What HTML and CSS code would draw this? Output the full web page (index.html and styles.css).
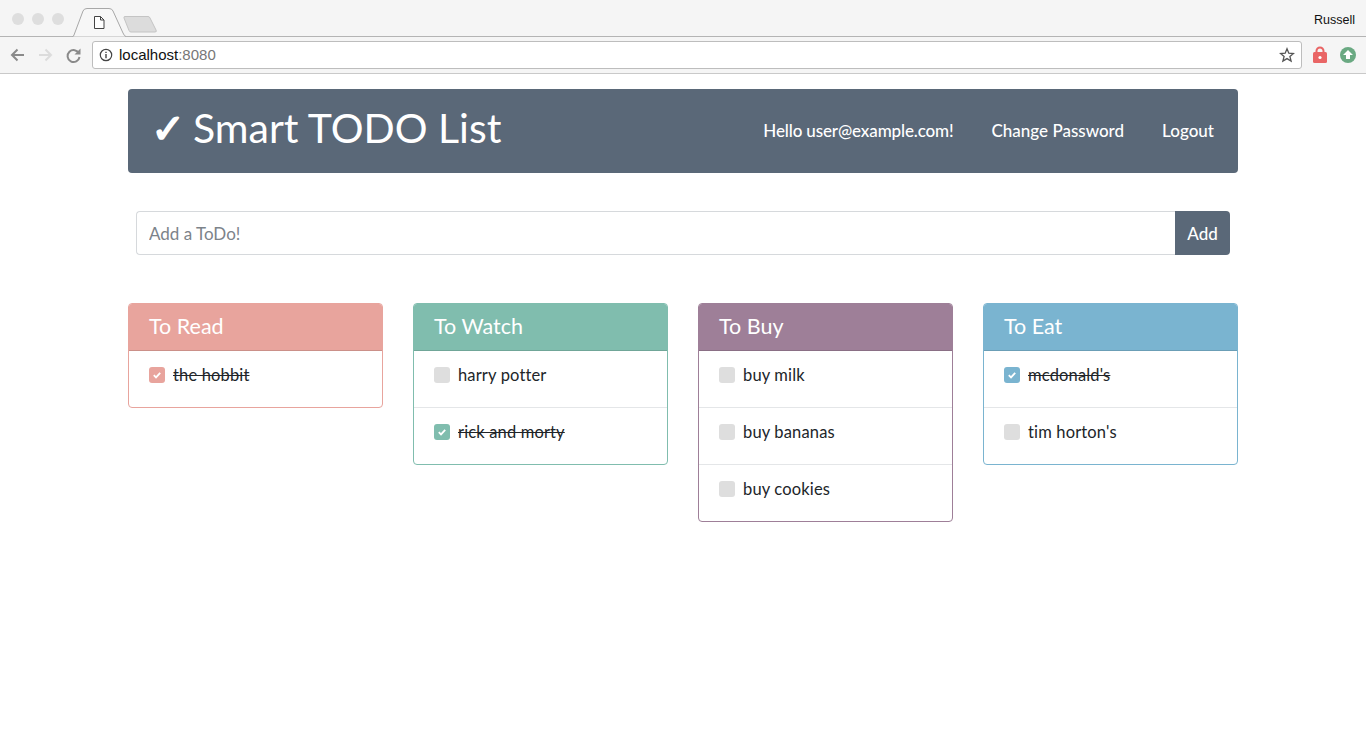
FILE: index.html
```html
<!DOCTYPE html>
<html lang="en">
<head>
<meta charset="utf-8">
<title>Smart TODO List</title>
<link rel="stylesheet" href="styles.css">
</head>
<body>
<div class="titlebar">
  <div class="lights"><span class="light"></span><span class="light"></span><span class="light"></span></div>
  <svg class="tabs" width="90" height="37" viewBox="0 0 90 37">
    <path d="M0 36.500H.5Q1.500 36.500 2 35L11 11Q12 8.500 15 8.500H37Q40 8.500 41 11L51 33Q52.500 36.500 54 36.500" fill="#f7f7f7" stroke="#a8a8a8"/>
    <path d="M22.500 16.500h6l3.500 3.500v8.500h-9.500zM28.500 16.500v3.500h3.500" fill="#fff" stroke="#444" stroke-width="1"/>
    <path d="M53 16.500H76Q77.500 16.500 78 18L84 30Q85 32 83 32H59Q57.500 32 57 30.500L52 18Q51.500 16.500 53 16.500Z" fill="#dcdcdc" stroke="#c4c4c4"/>
  </svg>
  <span class="username">Russell</span>
</div>
<div class="toolbar">
  <svg class="navicons" width="92" height="36" viewBox="0 0 92 36">
    <path d="M24 18H12M17.500 12.500L12 18l5.500 5.500" fill="none" stroke="#8a8a8a" stroke-width="2"/>
    <path d="M39 18H51M45.500 12.500L51 18l-5.500 5.500" fill="none" stroke="#dcdcdc" stroke-width="2"/>
    <path d="M79 16.500A6 6 0 1 0 79.500 20" fill="none" stroke="#8a8a8a" stroke-width="2"/>
    <path d="M80.500 11.500v6h-6z" fill="#8a8a8a"/>
  </svg>
  <div class="omnibox">
    <svg class="info" width="14" height="14" viewBox="0 0 14 14">
      <circle cx="7" cy="7" r="5.700" fill="none" stroke="#444" stroke-width="1.200"/>
      <path d="M7 6v4.200M7 3.700v1.300" stroke="#444" stroke-width="1.400"/>
    </svg>
    <span class="url">localhost<span class="port">:8080</span></span>
    <svg class="star" width="16" height="16" viewBox="0 0 16 16">
      <path d="M8 1.800l1.800 4.400 4.700.3-3.600 3 1.200 4.600L8 11.600l-4.100 2.500 1.200-4.600-3.600-3 4.700-.3z" fill="none" stroke="#555" stroke-width="1.300"/>
    </svg>
  </div>
  <svg class="ext" width="64" height="36" viewBox="0 0 64 36">
    <path d="M14.500 15v-1a3.500 3.500 0 0 1 7 0v1" fill="none" stroke="#e96565" stroke-width="2"/>
    <rect x="11" y="15" width="14" height="11" rx="1.500" fill="#e96565"/>
    <circle cx="18" cy="20.500" r="1.600" fill="#fff"/>
    <circle cx="46" cy="18" r="8" fill="#6aa982"/>
    <path d="M46 13l5 5h-3v4h-4v-4h-3z" fill="#fff"/>
  </svg>
</div>
<main class="page">
  <header class="banner">
    <h1 class="brand"><span class="brand-check">✓</span>Smart TODO List</h1>
    <nav class="nav">
      <a class="nav-link nav-greet">Hello user@example.com!</a>
      <a class="nav-link">Change Password</a>
      <a class="nav-link">Logout</a>
    </nav>
  </header>
  <form class="add-form">
    <input class="add-input" type="text" placeholder="Add a ToDo!">
    <button class="add-btn" type="button">Add</button>
  </form>
  <section class="board">
    <article class="card card-read">
      <h2 class="card-title">To Read</h2>
      <ul class="items">
        <li class="item done"><span class="box"><svg width="10" height="10" viewBox="0 0 10 10"><path d="M1.800 5.200L4 7.400 8.200 2.800" fill="none" stroke="#fff" stroke-width="1.800"/></svg></span><span class="label">the hobbit</span></li>
      </ul>
    </article>
    <article class="card card-watch">
      <h2 class="card-title">To Watch</h2>
      <ul class="items">
        <li class="item"><span class="box"></span><span class="label">harry potter</span></li>
        <li class="item done"><span class="box"><svg width="10" height="10" viewBox="0 0 10 10"><path d="M1.800 5.200L4 7.400 8.200 2.800" fill="none" stroke="#fff" stroke-width="1.800"/></svg></span><span class="label">rick and morty</span></li>
      </ul>
    </article>
    <article class="card card-buy">
      <h2 class="card-title">To Buy</h2>
      <ul class="items">
        <li class="item"><span class="box"></span><span class="label">buy milk</span></li>
        <li class="item"><span class="box"></span><span class="label">buy bananas</span></li>
        <li class="item"><span class="box"></span><span class="label">buy cookies</span></li>
      </ul>
    </article>
    <article class="card card-eat">
      <h2 class="card-title">To Eat</h2>
      <ul class="items">
        <li class="item done"><span class="box"><svg width="10" height="10" viewBox="0 0 10 10"><path d="M1.800 5.200L4 7.400 8.200 2.800" fill="none" stroke="#fff" stroke-width="1.800"/></svg></span><span class="label">mcdonald's</span></li>
        <li class="item"><span class="box"></span><span class="label">tim horton's</span></li>
      </ul>
    </article>
  </section>
</main>
</body>
</html>
```
FILE: styles.css
```css
* { box-sizing: border-box; }
html, body { margin: 0; padding: 0; background: #fff; }
body { height: 741px; overflow: hidden; font-family: "Lato", "Noto Sans", sans-serif; color: #212529; }

.titlebar { display: flex; align-items: flex-start; height: 37px; background: #f5f5f5; border-bottom: 1px solid #b4b4b4; }
.lights { display: flex; gap: 8px; padding: 13px 0 0 12px; width: 72px; flex: none; }
.light { width: 12px; height: 12px; border-radius: 50%; background: #dedede; }
.tabs { display: block; flex: none; }
.username { margin-left: auto; padding: 12px 11px 0 0; font: 12.500px/16px "Liberation Sans", sans-serif; color: #111; }

.toolbar { display: flex; align-items: flex-start; height: 37px; background: #f5f5f5; border-bottom: 1px solid #c9c9c9; }
.navicons { display: block; flex: none; }
.omnibox { display: flex; align-items: center; width: 1210px; height: 28px; margin-top: 4px; padding: 0 6px; background: #fff; border: 1px solid #bdbdbd; border-radius: 3px; }
.info { flex: none; }
.url { margin-left: 6px; font: 15px/18px "Liberation Sans", sans-serif; color: #111; }
.port { color: #777; }
.star { margin-left: auto; flex: none; }
.ext { display: block; flex: none; }

.page { width: 1110px; margin: 15px auto 0; }
.banner { display: flex; align-items: center; justify-content: space-between; height: 84px; padding: 0 24px 0 25px; background: #5a6878; border-radius: 4px; color: #fff; }
.brand { display: flex; align-items: center; margin: 0 0 7px; font-size: 41px; line-height: 50px; font-weight: 400; }
.brand-check { width: 42px; margin-left: -2px; -webkit-text-stroke: 1.500px #fff; }
.nav { display: flex; gap: 38px; }
.nav-link { font-size: 17px; line-height: 24px; font-weight: 500; color: #fff; }
.nav-greet { letter-spacing: -.13px; }

.add-form { display: flex; height: 44px; margin: 38px 8px 0; }
.add-input { flex: 1; min-width: 0; height: 44px; padding: 0 12px; font: 17px "Lato", sans-serif; color: #495057; background: #fff; border: 1px solid #d6d9dc; border-right: 0; border-radius: 4px 0 0 4px; outline: 0; }
.add-input::placeholder { color: #7c838a; opacity: 1; }
.add-btn { width: 55px; height: 44px; padding: 0; font: 500 17px "Lato", sans-serif; color: #fff; background: #5a6878; border: 0; border-radius: 0 4px 4px 0; }

.board { display: grid; grid-template-columns: repeat(4, 255px); gap: 30px; align-items: start; margin-top: 48px; }
.card { border: 1px solid var(--c); border-radius: 4px; overflow: hidden; background: #fff; }
.card-read { --c: #e8a49d; }
.card-watch { --c: #80bdae; }
.card-buy { --c: #9e7f98; }
.card-eat { --c: #7ab4d0; }
.card-title { margin: -1px -1px 0; height: 48px; padding: 0 21px; font-size: 21.500px; line-height: 47px; font-weight: 400; color: #fff; background: var(--c); border-bottom: 1px solid rgba(0,0,0,.12); }
.items { margin: 0; padding: 0; list-style: none; }
.item { display: flex; align-items: center; height: 57px; padding: 0 20px 8px; border-top: 1px solid #e4e6e8; }
.item:first-child { border-top: 0; height: 56px; }
.box { display: flex; align-items: center; justify-content: center; width: 16px; height: 16px; flex: none; border-radius: 3px; background: #dedede; }
.done .box { background: var(--c); }
.box svg { display: block; }
.label { margin-left: 8px; font-size: 16.500px; line-height: 24px; letter-spacing: .15px; color: #212529; }
.done .label { text-decoration: line-through; }
```
